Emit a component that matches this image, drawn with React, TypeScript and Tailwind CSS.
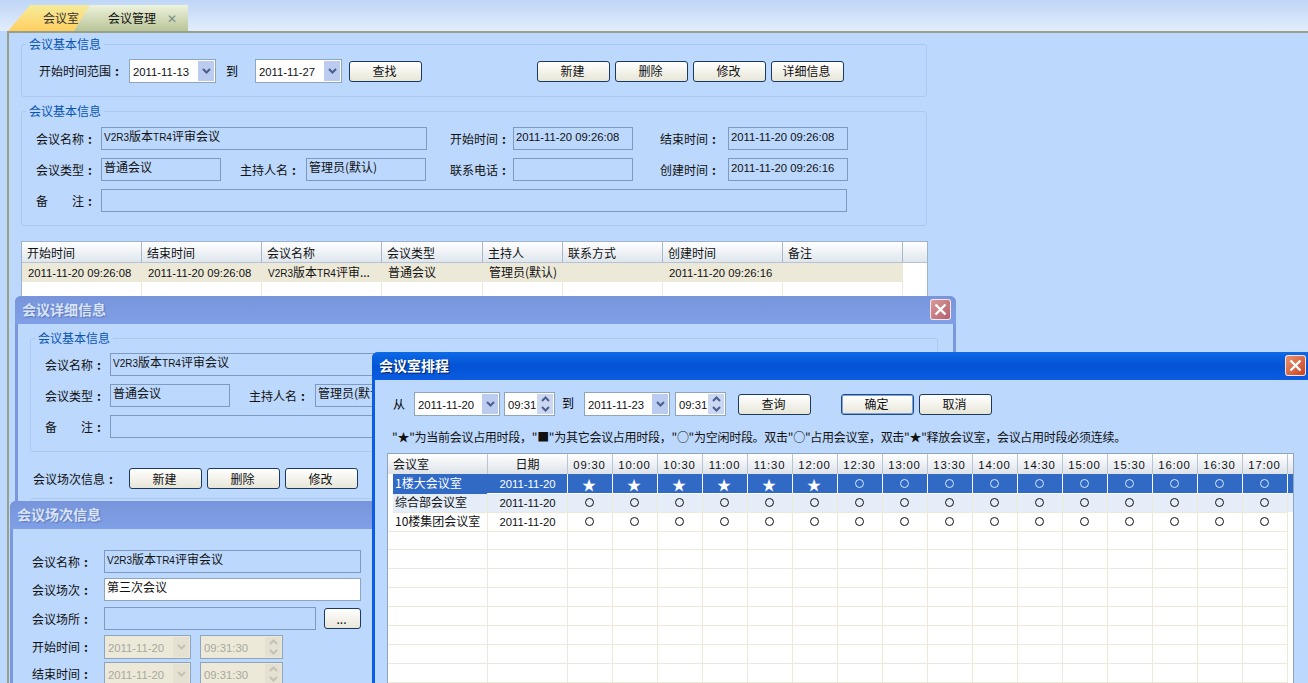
import type { ReactNode } from 'react';

const slots = ['09:30', '10:00', '10:30', '11:00', '11:30', '12:00', '12:30', '13:00', '13:30', '14:00', '14:30', '15:00', '15:30', '16:00', '16:30', '17:00'];
const rooms = ['1楼大会议室', '综合部会议室', '10楼集团会议室'];
const headCols = 'grid grid-cols-[100px_80px_repeat(16,45px)_5px]';
const rowCols = 'grid grid-cols-[95px_80px_repeat(16,45px)_5px]';

function Num({ children }: { children: ReactNode }) {
  return <span className="font-['Liberation_Sans',sans-serif] text-[11.3px]">{children}</span>;
}

function MeetingName({ short = false }: { short?: boolean }) {
  return (
    <>
      <span className="font-['Liberation_Sans',sans-serif] text-[10px]">V2R3</span>版本
      <span className="font-['Liberation_Sans',sans-serif] text-[10px]">TR4</span>
      {short ? '评审...' : '评审会议'}
    </>
  );
}

function Btn({ children, w = 'w-[73px]', focus = false }: { children: ReactNode; w?: string; focus?: boolean }) {
  return (
    <button className={`${w} h-[21px] shrink-0 rounded-[3px] border bg-gradient-to-b from-white to-[#e8e6d8] pr-[2px] text-center text-[12px] leading-[18px] text-[#111] ${focus ? 'border-[#1c4a8e] shadow-[inset_0_0_0_1px_#7fa4dc]' : 'border-[#1c3a5e]'}`}>
      {children}
    </button>
  );
}

function Chevron({ color = '#4a5f8a', up = false }: { color?: string; up?: boolean }) {
  return (
    <svg width="9" height="6" viewBox="0 0 9 6" fill="none">
      <path d={up ? 'M1 5L4.5 1.5L8 5' : 'M1 1L4.5 4.5L8 1'} stroke={color} strokeWidth="2" />
    </svg>
  );
}

function Combo({ value, w = 'w-[87px]', disabled = false }: { value: string; w?: string; disabled?: boolean }) {
  return (
    <div className={`${w} flex h-[24px] shrink-0 items-center justify-between border border-[#8fa4bd] p-[1px] ${disabled ? 'bg-[#ece9d8] text-[#a8a8a0]' : 'bg-white text-[#111]'}`}>
      <span className="pl-[2px]"><Num>{value}</Num></span>
      <span className={`flex h-full w-[16px] items-center justify-center ${disabled ? 'bg-[#e4e1d2]' : 'bg-[#bccbf0]'}`}>
        <Chevron color={disabled ? '#c4c2b6' : '#4a5f8a'} />
      </span>
    </div>
  );
}

function Spin({ value, w = 'w-[51px]', disabled = false }: { value: string; w?: string; disabled?: boolean }) {
  const arrow = disabled ? '#c4c2b6' : '#4a5f8a';
  return (
    <div className={`${w} flex h-[24px] shrink-0 items-center justify-between border border-[#8fa4bd] p-[1px] ${disabled ? 'bg-[#ece9d8] text-[#a8a8a0]' : 'bg-white text-[#111]'}`}>
      <span className="pl-[2px]"><Num>{value}</Num></span>
      <span className={`flex h-full w-[16px] flex-col items-center justify-around ${disabled ? 'bg-[#e4e1d2]' : 'bg-[#cbd6f2]'}`}>
        <Chevron color={arrow} up />
        <Chevron color={arrow} />
      </span>
    </div>
  );
}

function Field({ children, w, white = false }: { children?: ReactNode; w: string; white?: boolean }) {
  return (
    <div className={`${w} h-[23px] shrink-0 overflow-hidden whitespace-nowrap border px-[2px] text-[12px] leading-[16px] text-[#111] ${white ? 'border-[#8fa4bd] bg-white' : 'border-[#7f9ac0] bg-[#bcd8fd]'}`}>
      {children}
    </div>
  );
}

function Label({ text, w }: { text: string; w: string }) {
  return (
    <span className={`${w} shrink-0 whitespace-nowrap text-[12px] text-[#111]`}>
      {text}
      <span className="ml-[4px] font-bold">:</span>
    </span>
  );
}

function Group({ title, className, children }: { title: string; className: string; children?: ReactNode }) {
  return (
    <div className={`relative rounded-[3px] border border-[#abc8ee] ${className}`}>
      <span className="absolute -top-[9px] left-[4px] bg-[#bcd8fd] px-[3px] text-[12px] leading-[16px] text-[#0a55b0]">{title}</span>
      {children}
    </div>
  );
}

// the detail window's right half sits under the schedule window, so it only draws the left half
function InfoRows({ top = 'pt-[15px]', full = true }: { top?: string; full?: boolean }) {
  return (
    <div className={`flex flex-col gap-[8px] pl-[14px] ${top}`}>
      <div className="flex items-center">
        <Label text="会议名称" w="w-[65px]" />
        <Field w="w-[326px]"><MeetingName /></Field>
        {full && (
          <>
            <Label text="开始时间" w="ml-[23px] w-[63px]" />
            <Field w="w-[120px]"><Num>2011-11-20 09:26:08</Num></Field>
            <Label text="结束时间" w="ml-[27px] w-[68px]" />
            <Field w="w-[120px]"><Num>2011-11-20 09:26:08</Num></Field>
          </>
        )}
      </div>
      <div className="flex items-center">
        <Label text="会议类型" w="w-[65px]" />
        <Field w="w-[120px]">普通会议</Field>
        <Label text="主持人名" w="ml-[19px] w-[66px]" />
        <Field w="w-[120px]">管理员(默认)</Field>
        {full && (
          <>
            <Label text="联系电话" w="ml-[24px] w-[63px]" />
            <Field w="w-[120px]" />
            <Label text="创建时间" w="ml-[27px] w-[68px]" />
            <Field w="w-[120px]"><Num>2011-11-20 09:26:16</Num></Field>
          </>
        )}
      </div>
      <div className="flex items-center">
        <Label text="备&emsp;&emsp;注" w="w-[65px]" />
        <Field w="w-[746px]" />
      </div>
    </div>
  );
}

function CloseBtn({ active = false }: { active?: boolean }) {
  return (
    <span className={`-mt-[2px] flex h-[21px] w-[21px] items-center justify-center rounded-[3px] border border-white/80 ${active ? 'bg-gradient-to-br from-[#e9926f] to-[#c8401c]' : 'bg-gradient-to-br from-[#d99a9a] to-[#b4606c]'}`}>
      <svg width="13" height="13" viewBox="0 0 13 13" fill="none">
        <path d="M1.5 1.5L11.5 11.5M11.5 1.5L1.5 11.5" stroke="white" strokeWidth="2.4" />
      </svg>
    </span>
  );
}

function Window({ title, className, active = false, close = true, children }: { title: string; className: string; active?: boolean; close?: boolean; children: ReactNode }) {
  return (
    <div className={`absolute flex flex-col rounded-t-[6px] bg-[#bcd8fd] ${active ? 'border-x-[3px] border-[#0a5ce0]' : 'border-x-[3px] border-[#7b98dd]'} ${className}`}>
      <div className={`-mx-[3px] flex h-[28px] shrink-0 items-center justify-between rounded-t-[6px] pl-[7px] text-[14px] font-bold ${active ? 'bg-gradient-to-b from-[#0f6ae6] via-[#0453d6] to-[#0a5ce0] pr-[6px] text-white [text-shadow:1px_1px_1px_#02225f]' : 'bg-gradient-to-b from-[#7895db] to-[#7f9fe6] pr-[5px] text-[#d8e4f8] [text-shadow:1px_1px_1px_#5a74b8]'}`}>
        <span className="pb-[2px]">{title}</span>
        {close && <CloseBtn active={active} />}
      </div>
      {children}
    </div>
  );
}

function TopTable() {
  const cols = [
    ['开始时间', 'w-[120px]'],
    ['结束时间', 'w-[120px]'],
    ['会议名称', 'w-[120px]'],
    ['会议类型', 'w-[101px]'],
    ['主持人', 'w-[80px]'],
    ['联系方式', 'w-[100px]'],
    ['创建时间', 'w-[120px]'],
    ['备注', 'w-[120px]'],
  ];
  const row: ReactNode[] = [
    <Num>2011-11-20 09:26:08</Num>,
    <Num>2011-11-20 09:26:08</Num>,
    <span className="whitespace-nowrap"><MeetingName short /></span>,
    '普通会议',
    '管理员(默认)',
    '',
    <Num>2011-11-20 09:26:16</Num>,
    '',
  ];
  return (
    <div className="w-[907px] border border-[#9db3cc] bg-white text-[12px] text-[#111]">
      <div className="flex h-[21px] border-b border-[#b4c4d6] bg-gradient-to-b from-white to-[#dfe6ee]">
        {cols.map(([name, w]) => (
          <div key={name} className={`${w} border-r border-[#a9b8c8] pl-[5px] leading-[21px]`}>{name}</div>
        ))}
      </div>
      <div className="flex h-[19px]">
        {cols.map(([name, w], i) => (
          <div key={name} className={`${w} overflow-hidden bg-[#ece9d8] pl-[6px] leading-[18px]`}>{row[i]}</div>
        ))}
      </div>
      <div className="flex h-[20px]">
        {cols.map(([name, w]) => (
          <div key={name} className={`${w} border-r border-b border-[#ece9d8]`} />
        ))}
      </div>
    </div>
  );
}

function Schedule() {
  return (
    <div className="w-[907px] overflow-hidden border border-[#8fa4bd] bg-white text-[12px] text-[#111]">
      <div className={`${headCols} h-[20px] bg-gradient-to-b from-white to-[#dde3ea] leading-[20px]`}>
        <div className="border-r border-[#b8c4d2] pl-[5px]">会议室</div>
        <div className="border-r border-[#b8c4d2] text-center">日期</div>
        {slots.map((t) => (
          <div key={t} className="border-r border-[#b8c4d2] pr-[1px] text-center tracking-[0.8px]"><Num>{t}</Num></div>
        ))}
        <div />
      </div>
      {Array.from({ length: 12 }).map((_, r) => {
        const selected = r === 0;
        const inset = r < 2;
        return (
          <div key={r} className={`h-[19px] leading-[18px] ${inset ? `${rowCols} border-l-[5px] border-l-white` : headCols} ${selected ? 'bg-[#316ac5] text-white' : r === 1 ? 'bg-[#e4edf8]' : 'bg-white'}`}>
            <div className={`overflow-hidden whitespace-nowrap border-r border-b ${inset ? 'pl-[2px]' : 'pl-[7px]'} ${selected ? 'border-[#316ac5]' : 'border-[#ece9d8]'}`}>{rooms[r]}</div>
            <div className={`border-r border-b text-center ${selected ? 'border-white' : 'border-[#ece9d8]'}`}>
              {r < 3 && <Num>2011-11-20</Num>}
            </div>
            {slots.map((t, i) => (
              <div key={t} className={`flex items-center justify-center border-r border-b pr-[2px] ${selected ? 'border-white' : 'border-[#ece9d8]'}`}>
                {r < 3 && (selected && i < 6 ? (
                  <span className="text-[14px] leading-none">★</span>
                ) : (
                  <span className={`h-[9px] w-[9px] rounded-full border ${selected ? 'border-[#d8e6fb]' : 'border-[#111]'}`} />
                ))}
              </div>
            ))}
            <div />
          </div>
        );
      })}
    </div>
  );
}

export default function App() {
  return (
    <div className="relative h-[683px] w-[1308px] overflow-hidden bg-[#bcd8fd] font-['Noto_Sans_CJK_SC',sans-serif] text-[12px]">
      {/* Tabs */}
      <div className="flex h-[31px] items-end bg-gradient-to-b from-[#bfd6f7] to-[#e2edfb] pl-[8px]">
        <div className="flex h-[26px] w-[82px] items-center justify-end bg-gradient-to-b from-[#f5eb9a] to-[#ffcf5e] pr-[11px] text-[#333] [clip-path:polygon(0_26px,22px_0,82px_0,66px_26px)]">
          会议室
        </div>
        <div className="-ml-[16px] flex h-[26px] w-[114px] items-center gap-[11px] bg-gradient-to-b from-[#eef3dc] to-[#b9c497] pl-[34px] text-[#111] [clip-path:polygon(0_26px,16px_0,114px_0,114px_26px)]">
          会议管理
          <span className="text-[12px] text-[#7a8f8c]">✕</span>
        </div>
      </div>

      {/* Main page */}
      <div className="ml-[7px] flex h-[652px] flex-col border-l-2 border-t-2 border-[#98a08a] pl-[12px] pt-[11px]">
        <Group title="会议基本信息" className="h-[53px] w-[906px] shrink-0">
          <div className="flex items-center pl-[17px] pt-[14px]">
            <Label text="开始时间范围" w="w-[90px]" />
            <Combo value="2011-11-13" />
            <span className="ml-[10px] w-[29px]">到</span>
            <Combo value="2011-11-27" />
            <span className="ml-[7px]"><Btn>查找</Btn></span>
            <div className="ml-[115px] flex gap-[5px]">
              <Btn>新建</Btn>
              <Btn>删除</Btn>
              <Btn>修改</Btn>
              <Btn>详细信息</Btn>
            </div>
          </div>
        </Group>
        <Group title="会议基本信息" className="mt-[14px] h-[115px] w-[906px] shrink-0">
          <InfoRows />
        </Group>
        <div className="mt-[15px]"><TopTable /></div>
      </div>

      {/* 会议详细信息 */}
      <Window title="会议详细信息" className="left-[15px] top-[296px] h-[400px] w-[941px]">
        <div className="pl-[12px] pt-[14px]">
          <Group title="会议基本信息" className="h-[114px] w-[908px]">
            <InfoRows top="pt-[14px]" full={false} />
          </Group>
          <div className="flex items-center gap-[5px] pl-[3px] pt-[16px]">
            <Label text="会议场次信息" w="w-[91px]" />
            <Btn>新建</Btn>
            <Btn>删除</Btn>
            <Btn>修改</Btn>
          </div>
          <div className="mt-[9px] h-[20px] w-[908px] rounded-t-[3px] border border-[#abc8ee]" />
        </div>
      </Window>

      {/* 会议场次信息 */}
      <Window title="会议场次信息" className="left-[10px] top-[501px] h-[200px] w-[380px]" close={false}>
        <div className="flex flex-col gap-[5px] pl-[19px] pt-[21px]">
          <div className="flex items-center">
            <Label text="会议名称" w="w-[72px]" />
            <Field w="w-[257px]"><MeetingName /></Field>
          </div>
          <div className="flex items-center">
            <Label text="会议场次" w="w-[72px]" />
            <Field w="w-[257px]" white>第三次会议</Field>
          </div>
          <div className="mt-[1px] flex items-center">
            <Label text="会议场所" w="w-[72px]" />
            <Field w="w-[212px]" />
            <span className="ml-[8px]"><Btn w="w-[37px]">...</Btn></span>
          </div>
          <div className="flex items-center">
            <Label text="开始时间" w="w-[72px]" />
            <Combo value="2011-11-20" disabled />
            <span className="ml-[9px]"><Spin value="09:31:30" w="w-[83px]" disabled /></span>
          </div>
          <div className="-mt-[2px] flex items-center">
            <Label text="结束时间" w="w-[72px]" />
            <Combo value="2011-11-20" disabled />
            <span className="ml-[9px]"><Spin value="09:31:30" w="w-[83px]" disabled /></span>
          </div>
        </div>
      </Window>

      {/* 会议室排程 */}
      <Window title="会议室排程" active className="left-[372px] top-[352px] h-[340px] w-[940px]">
        <div className="flex grow flex-col pl-[12px]">
          <div className="flex items-center pl-[6px] pt-[12px]">
            <span className="w-[21px]">从</span>
            <Combo value="2011-11-20" w="w-[86px]" />
            <span className="ml-[4px]"><Spin value="09:31" /></span>
            <span className="ml-[7px] w-[22px] pb-[3px]">到</span>
            <Combo value="2011-11-23" w="w-[86px]" />
            <span className="ml-[5px]"><Spin value="09:31" /></span>
            <span className="ml-[12px]"><Btn>查询</Btn></span>
            <span className="ml-[30px]"><Btn focus>确定</Btn></span>
            <span className="ml-[5px]"><Btn>取消</Btn></span>
          </div>
          <div className="whitespace-nowrap pl-[5px] pt-[12px] text-[12px] leading-[18px] tracking-[-0.28px] text-[#111]">
            "★"为当前会议占用时段，"■"为其它会议占用时段，"○"为空闲时段。双击"○"占用会议室，双击"★"释放会议室，会议占用时段必须连续。
          </div>
          <div className="mt-[7px] flex grow"><Schedule /></div>
        </div>
      </Window>
    </div>
  );
}
